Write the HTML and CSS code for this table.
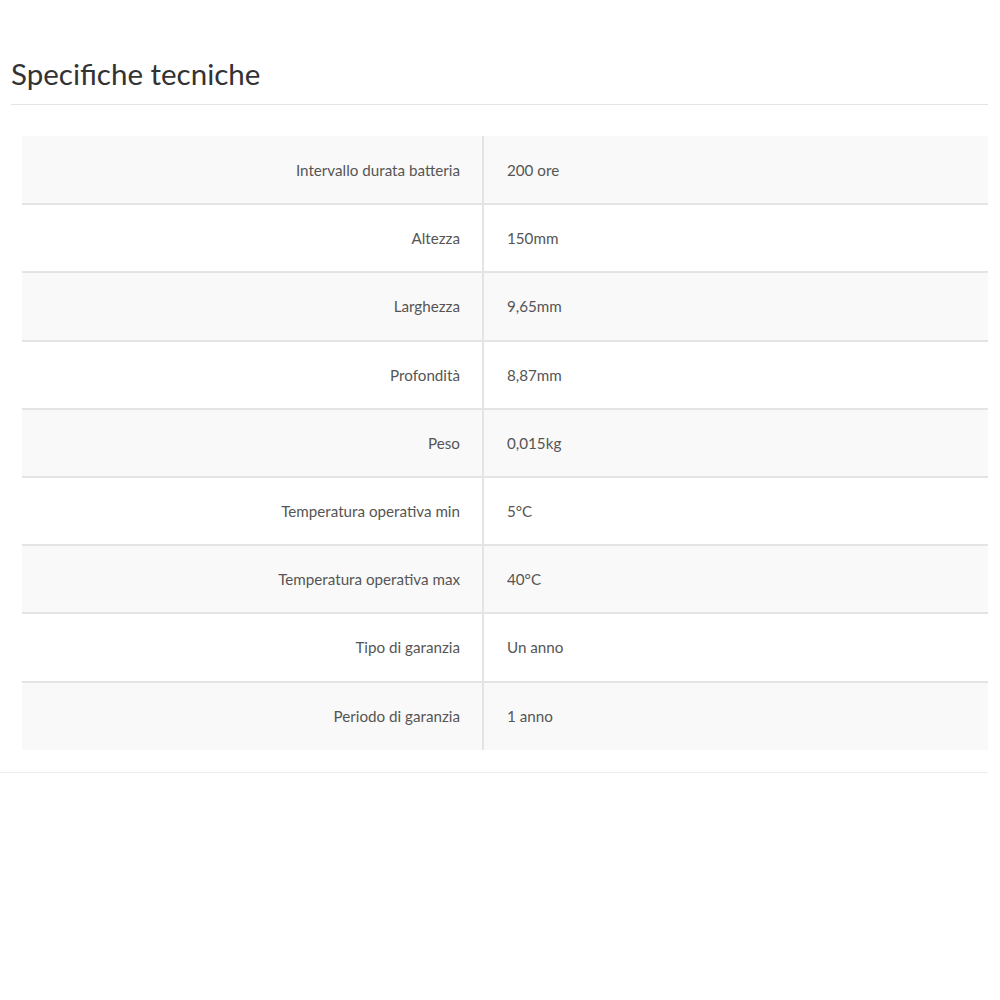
FILE: index.html
```html
<!DOCTYPE html>
<html lang="it">
<head>
<meta charset="utf-8">
<title>Specifiche tecniche</title>
<link rel="stylesheet" href="styles.css">
</head>
<body>
<section class="specs">
  <h2 class="specs-title">Specifiche tecniche</h2>
  <table class="specs-table">
    <tbody>
      <tr><th>Intervallo durata batteria</th><td>200 ore</td></tr>
      <tr><th>Altezza</th><td>150mm</td></tr>
      <tr><th>Larghezza</th><td>9,65mm</td></tr>
      <tr><th>Profondità</th><td>8,87mm</td></tr>
      <tr><th>Peso</th><td>0,015kg</td></tr>
      <tr><th>Temperatura operativa min</th><td>5°C</td></tr>
      <tr><th>Temperatura operativa max</th><td>40°C</td></tr>
      <tr><th>Tipo di garanzia</th><td>Un anno</td></tr>
      <tr><th>Periodo di garanzia</th><td>1 anno</td></tr>
    </tbody>
  </table>
</section>
</body>
</html>
```
FILE: styles.css
```css
html, body {
  margin: 0;
  padding: 0;
  background: #ffffff;
}
body {
  font-family: Lato, "Open Sans", Arial, sans-serif;
  color: #444;
}
.specs {
  width: 988px;
  padding-top: 56px;
  padding-bottom: 22px;
  box-shadow: 0 3px 3px -2px rgba(0, 0, 0, 0.08);
  border-bottom: 1px solid #ececec;
}
.specs-title {
  margin: 0 0 0 11px;
  padding: 0 0 12px 0;
  font-size: 29.5px;
  font-weight: 400;
  line-height: 36px;
  color: #333;
  border-bottom: 1px solid #e4e4e4;
}
.specs-table {
  margin: 31px 0 0 22px;
  width: 966px;
  border-collapse: collapse;
  font-size: 15.2px;
  color: #555;
}
.specs-table tr {
  height: 68.2px;
}
.specs-table tr + tr th,
.specs-table tr + tr td {
  border-top: 2px solid #e4e4e4;
}
.specs-table tr:nth-child(odd) {
  background: #f9f9f9;
}
.specs-table th {
  width: 438px;
  padding: 0 22px 0 0;
  text-align: right;
  font-weight: 400;
  border-right: 2px solid #e4e4e4;
}
.specs-table td {
  padding: 0 0 0 23px;
  text-align: left;
}
```
